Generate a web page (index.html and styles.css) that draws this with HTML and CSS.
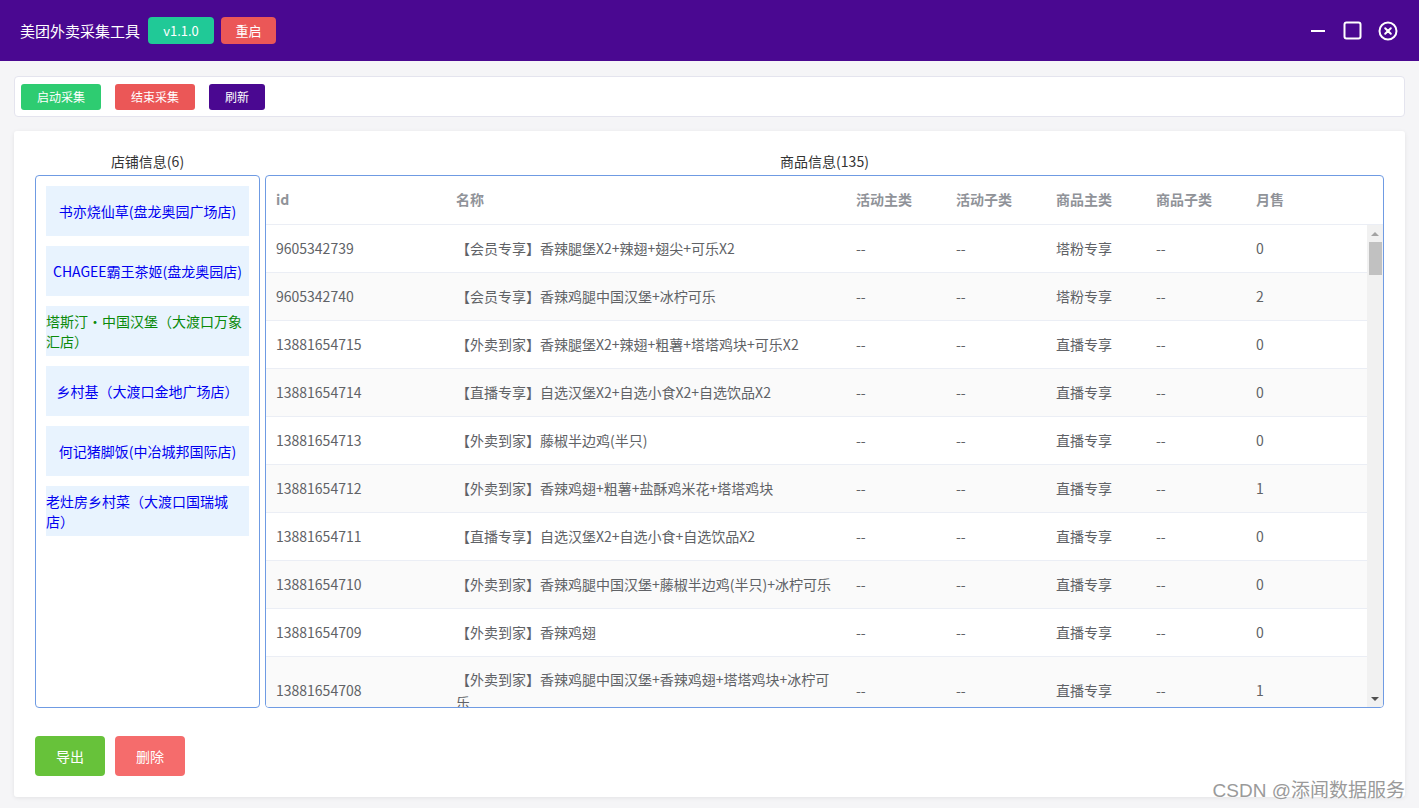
FILE: index.html
```html
<!DOCTYPE html>
<html lang="zh-CN">
<head>
<meta charset="utf-8">
<title>美团外卖采集工具</title>
<link rel="stylesheet" href="styles.css">
</head>
<body>
<div class="app">
  <header class="titlebar">
    <div class="title">美团外卖采集工具</div>
    <button class="tb-btn tb-version">v1.1.0</button>
    <button class="tb-btn tb-restart">重启</button>
    <div class="spacer"></div>
    <div class="win-controls">
      <svg class="win-icon win-min" width="16" height="18" viewBox="0 0 16 18"><line x1="1" y1="9" x2="15" y2="9" stroke="#fff" stroke-width="2"/></svg>
      <svg class="win-icon win-max" width="19" height="19" viewBox="0 0 19 19"><rect x="1.5" y="1.5" width="16" height="16" rx="2" fill="none" stroke="#fff" stroke-width="2"/></svg>
      <svg class="win-icon win-close" width="20" height="20" viewBox="0 0 20 20"><circle cx="10" cy="10" r="8.5" fill="none" stroke="#fff" stroke-width="2"/><path d="M7.2 7.2 L12.8 12.8 M12.8 7.2 L7.2 12.8" stroke="#fff" stroke-width="2" stroke-linecap="round"/></svg>
    </div>
  </header>

  <main class="content">
    <div class="toolbar">
      <button class="sm-btn sm-green">启动采集</button>
      <button class="sm-btn sm-red">结束采集</button>
      <button class="sm-btn sm-purple">刷新</button>
    </div>

    <section class="card">
      <div class="panels">
        <div class="store-panel">
          <div class="panel-title">店铺信息(6)</div>
          <div class="store-box">
            <div class="store-item"><span>书亦烧仙草(盘龙奥园广场店)</span></div>
            <div class="store-item"><span>CHAGEE霸王茶姬(盘龙奥园店)</span></div>
            <div class="store-item active"><span>塔斯汀・中国汉堡（大渡口万象汇店）</span></div>
            <div class="store-item"><span>乡村基（大渡口金地广场店）</span></div>
            <div class="store-item"><span>何记猪脚饭(中冶城邦国际店)</span></div>
            <div class="store-item"><span>老灶房乡村菜（大渡口国瑞城店）</span></div>
          </div>
        </div>
        <div class="goods-panel">
          <div class="panel-title">商品信息(135)</div>
          <div class="goods-box">
            <div class="trow thead">
              <div class="c c-id">id</div>
              <div class="c c-name">名称</div>
              <div class="c c-s">活动主类</div>
              <div class="c c-s">活动子类</div>
              <div class="c c-s">商品主类</div>
              <div class="c c-s">商品子类</div>
              <div class="c c-last">月售</div>
            </div>
            <div class="tbody-wrap">
              <div class="tbody">
                <div class="trow"><div class="c c-id">9605342739</div><div class="c c-name">【会员专享】香辣腿堡X2+辣翅+翅尖+可乐X2</div><div class="c c-s">--</div><div class="c c-s">--</div><div class="c c-s">塔粉专享</div><div class="c c-s">--</div><div class="c c-last">0</div></div>
                <div class="trow"><div class="c c-id">9605342740</div><div class="c c-name">【会员专享】香辣鸡腿中国汉堡+冰柠可乐</div><div class="c c-s">--</div><div class="c c-s">--</div><div class="c c-s">塔粉专享</div><div class="c c-s">--</div><div class="c c-last">2</div></div>
                <div class="trow"><div class="c c-id">13881654715</div><div class="c c-name">【外卖到家】香辣腿堡X2+辣翅+粗薯+塔塔鸡块+可乐X2</div><div class="c c-s">--</div><div class="c c-s">--</div><div class="c c-s">直播专享</div><div class="c c-s">--</div><div class="c c-last">0</div></div>
                <div class="trow"><div class="c c-id">13881654714</div><div class="c c-name">【直播专享】自选汉堡X2+自选小食X2+自选饮品X2</div><div class="c c-s">--</div><div class="c c-s">--</div><div class="c c-s">直播专享</div><div class="c c-s">--</div><div class="c c-last">0</div></div>
                <div class="trow"><div class="c c-id">13881654713</div><div class="c c-name">【外卖到家】藤椒半边鸡(半只)</div><div class="c c-s">--</div><div class="c c-s">--</div><div class="c c-s">直播专享</div><div class="c c-s">--</div><div class="c c-last">0</div></div>
                <div class="trow"><div class="c c-id">13881654712</div><div class="c c-name">【外卖到家】香辣鸡翅+粗薯+盐酥鸡米花+塔塔鸡块</div><div class="c c-s">--</div><div class="c c-s">--</div><div class="c c-s">直播专享</div><div class="c c-s">--</div><div class="c c-last">1</div></div>
                <div class="trow"><div class="c c-id">13881654711</div><div class="c c-name">【直播专享】自选汉堡X2+自选小食+自选饮品X2</div><div class="c c-s">--</div><div class="c c-s">--</div><div class="c c-s">直播专享</div><div class="c c-s">--</div><div class="c c-last">0</div></div>
                <div class="trow"><div class="c c-id">13881654710</div><div class="c c-name">【外卖到家】香辣鸡腿中国汉堡+藤椒半边鸡(半只)+冰柠可乐</div><div class="c c-s">--</div><div class="c c-s">--</div><div class="c c-s">直播专享</div><div class="c c-s">--</div><div class="c c-last">0</div></div>
                <div class="trow"><div class="c c-id">13881654709</div><div class="c c-name">【外卖到家】香辣鸡翅</div><div class="c c-s">--</div><div class="c c-s">--</div><div class="c c-s">直播专享</div><div class="c c-s">--</div><div class="c c-last">0</div></div>
                <div class="trow"><div class="c c-id">13881654708</div><div class="c c-name">【外卖到家】香辣鸡腿中国汉堡+香辣鸡翅+塔塔鸡块+冰柠可乐</div><div class="c c-s">--</div><div class="c c-s">--</div><div class="c c-s">直播专享</div><div class="c c-s">--</div><div class="c c-last">1</div></div>
              </div>
              <div class="vscroll">
                <div class="arrow up"></div>
                <div class="thumb"></div>
                <div class="track"></div>
                <div class="arrow down"></div>
              </div>
            </div>
          </div>
        </div>
      </div>
      <div class="actions">
        <button class="lg-btn lg-green">导出</button>
        <button class="lg-btn lg-red">删除</button>
      </div>
    </section>
  </main>
  <div class="watermark">CSDN @添闻数据服务</div>
</div>
</body>
</html>
```

FILE: styles.css
```css
* { box-sizing: border-box; }
html, body { margin: 0; padding: 0; }
body {
  font-family: "Noto Sans CJK SC", "Noto Sans", sans-serif;
  background: #f5f5f7;
  width: 1419px;
  height: 808px;
  overflow: hidden;
  color: #333;
  text-spacing-trim: space-all;
}
button { font-family: inherit; border: none; cursor: pointer; color: #fff; padding: 0; }

.app { position: relative; width: 1419px; height: 808px; }

.titlebar {
  height: 61px;
  background: #4a0891;
  display: flex;
  align-items: center;
  padding: 0 21px 0 20px;
}
.title { color: #fff; font-size: 15px; margin-right: 8px; }
.tb-btn { height: 27px; border-radius: 4px; font-size: 13px; margin-right: 7px; }
.tb-version { width: 66px; background: #20c997; }
.tb-restart { width: 55px; background: #eb5757; }
.spacer { flex: 1; }
.win-controls { display: flex; align-items: center; }
.win-icon { display: block; }
.win-min { margin-right: 17px; }
.win-max { margin-right: 16px; }

.content { padding: 15px 14px 0 14px; }

.toolbar {
  height: 41px;
  background: #fff;
  border: 1px solid #e4e4ee;
  border-radius: 4px;
  display: flex;
  align-items: center;
  padding: 0 6px;
  gap: 14px;
}
.sm-btn { height: 26px; border-radius: 3px; font-size: 12px; }
.sm-green { width: 80px; background: #2ecc71; }
.sm-red { width: 80px; background: #eb5757; }
.sm-purple { width: 56px; background: #4a0891; }

.card {
  margin-top: 14px;
  height: 666px;
  background: #fff;
  border-radius: 3px;
  box-shadow: 0 1px 4px rgba(0,0,0,0.08);
  padding: 21px 21px 0 21px;
}
.panels { display: flex; gap: 5px; }
.panel-title { height: 23px; font-size: 14px; text-align: center; color: #333; line-height: 18px; }
.store-panel { width: 225px; }
.store-box {
  height: 533px;
  border: 1px solid #6f9be3;
  border-radius: 4px;
  padding: 10px;
  display: flex;
  flex-direction: column;
  gap: 10px;
}
.store-item {
  height: 50px;
  background: #e8f3fe;
  display: flex;
  align-items: center;
  justify-content: center;
  color: #0000f0;
  font-size: 14px;
  line-height: 20px;
  text-spacing-trim: space-all;
}
.store-item span { text-spacing-trim: space-all; }
.store-item.active { color: #0a8a0a; }

.goods-panel { flex: 1; }
.goods-box {
  height: 533px;
  border: 1px solid #6f9be3;
  border-radius: 4px;
  display: flex;
  flex-direction: column;
  overflow: hidden;
}
.trow { display: flex; align-items: center; min-height: 48px; border-bottom: 1px solid #ebeef5; font-size: 14px; color: #606266; }
.thead { color: #909399; font-weight: bold; flex: none; min-height: 49px; padding-bottom: 1px; }
.c { padding: 0 10px; line-height: 23px; }
.c-id { width: 180px; flex: none; }
.c-name { width: 400px; flex: none; }
.c-s { width: 100px; flex: none; }
.c-last { flex: 1; }
.tbody-wrap { flex: 1; display: flex; min-height: 0; overflow: hidden; }
.tbody { flex: 1; overflow: hidden; }
.tbody .trow:nth-child(even) { background: #fafafa; }
.tbody .trow:nth-child(10) { min-height: 68px; }

.vscroll { width: 16px; flex: none; background: #f1f1f1; display: flex; flex-direction: column; align-items: center; }
.arrow { width: 0; height: 0; border-left: 4px solid transparent; border-right: 4px solid transparent; margin: 7px 0 6px; }
.arrow.up { border-bottom: 4px solid #a3a3a3; }
.arrow.down { border-top: 4px solid #505050; margin: 5px 0 6px; }
.thumb { width: 13px; height: 33px; background: #c1c1c1; }
.track { flex: 1; }

.actions { display: flex; gap: 10px; margin-top: 28px; }
.lg-btn { width: 70px; height: 40px; border-radius: 4px; font-size: 14px; }
.lg-green { background: #67c23a; }
.lg-red { background: #f56c6c; }

.watermark {
  position: absolute;
  right: 14px;
  bottom: 6px;
  font-family: "Liberation Sans", "Noto Sans CJK SC", sans-serif;
  font-size: 19px;
  color: #9a9a9a;
  text-shadow: 0 0 2px #fff, 0 0 1px #fff;
}
```
